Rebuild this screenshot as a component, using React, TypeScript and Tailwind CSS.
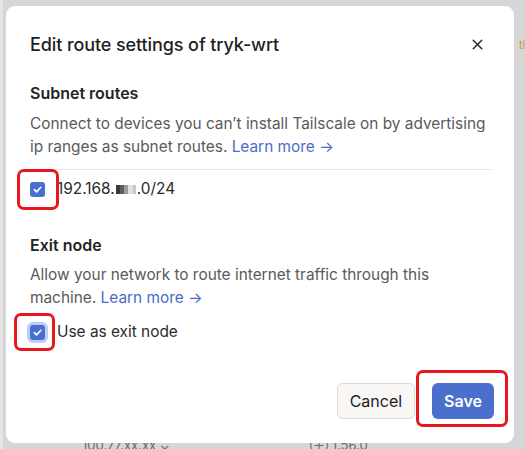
import { X } from "lucide-react";

const font = { fontFamily: "Inter, 'Liberation Sans', sans-serif" };

function Check({ focused }: { focused?: boolean }) {
  return (
    <span
      className={`grid h-[15px] w-[15px] shrink-0 place-items-center rounded-[3px] bg-[#4b6fcd] ${
        focused ? "ring-[3px] ring-[#bcd0f7]" : ""
      }`}
    >
      <svg viewBox="0 0 12 12" className="h-[11px] w-[11px]" fill="none">
        <path d="M2.5 6.2 5 8.6 9.6 3.6" stroke="white" strokeWidth="1.8" strokeLinecap="round" strokeLinejoin="round" />
      </svg>
    </span>
  );
}

function LearnMore() {
  return <a className="text-[#4a6bc9]">Learn more →</a>;
}

/** Red annotation box drawn over the screenshot. */
function Mark({ className }: { className: string }) {
  return <div className={`pointer-events-none absolute rounded-[7px] border-[3px] border-[#e8161f] ${className}`} />;
}

export default function App() {
  return (
    <div className="relative h-[449px] w-[525px] overflow-hidden bg-[#d6d6d6]" style={font}>
      {/* dimmed page behind the dialog */}
      <div className="flex h-full">
        <div className="w-[3px] bg-[#e4e4e4]" />
        <div className="flex-1" />
        <div className="mt-[40px] h-[10px] w-[6px] text-[11px] leading-[10px] text-[#c49a4a]">ti</div>
      </div>
      <div className="absolute bottom-[-6px] left-[82px] flex gap-[140px] text-[13px] text-[#6a6a6a]">
        <span>100.77.xx.xx ⌄</span>
        <span>⊕ 1.56.0</span>
      </div>

      {/* dialog */}
      <div className="absolute inset-0 p-[6px] pr-[11px] pb-[6px]">
        <div className="flex h-full flex-col rounded-[9px] bg-white pb-6 pl-6 pr-5 pt-6 text-[16px]">
          <div className="flex h-7 items-center justify-between">
            <h2 className="text-[18px] font-medium tracking-[-0.1px] text-[#1f1f1f]">Edit route settings of tryk-wrt</h2>
            <X className="mr-[8px] h-[17px] w-[17px] text-[#2a2a2a]" strokeWidth={2.1} />
          </div>

          <h3 className="mt-[23px] text-[16px] font-semibold leading-6 text-[#242424]">Subnet routes</h3>
          <p className="mt-[7px] text-[15.4px] leading-[23px] text-[#5a5a5a]">
            Connect to devices you can’t install Tailscale on by advertising
            <br />
            ip ranges as subnet routes. <LearnMore />
          </p>
          <div className="mr-[2px] mt-[11px] border-t border-[#e6e6e6]" />
          <label className="mt-[10px] flex h-[18px] items-center gap-[12px] text-[15.4px] text-[#2b2b2b]">
            <Check />
            <span className="flex items-center">
              192.168.
              <span className="mx-[1px] flex h-[9px] items-stretch">
                <span className="w-[4px] bg-[#3a3a3a]" />
                <span className="w-[4px] bg-[#5e5e5e]" />
                <span className="w-[4px] bg-[#9a9a9a]" />
                <span className="w-[5px] bg-[#e0e0e0]" />
                <span className="w-[3px] bg-[#c8c8c8]" />
              </span>
              .0/24
            </span>
          </label>

          <h3 className="mt-[35px] text-[16px] font-semibold leading-6 text-[#242424]">Exit node</h3>
          <p className="mt-1.5 text-[15.4px] leading-[23px] text-[#5a5a5a]">
            Allow your network to route internet traffic through this
            <br />
            machine. <LearnMore />
          </p>
          <label className="mt-[13px] flex h-[20px] items-center gap-[12px] text-[15.4px] text-[#2b2b2b]">
            <Check focused />
            <span>Use as exit node</span>
          </label>

          <div className="mt-auto flex justify-end gap-[17px]">
            <button className="h-9 rounded-md border border-[#dcd9d6] bg-[#f8f7f6] px-[12px] text-[16px] text-[#222]">
              Cancel
            </button>
            <button className="h-9 rounded-md bg-[#4b6fcd] px-[12px] text-[16px] font-semibold text-white">Save</button>
          </div>
        </div>
      </div>

      <Mark className="left-[17px] top-[169px] h-[41px] w-[42px]" />
      <Mark className="left-[14px] top-[313px] h-[38px] w-[41px]" />
      <Mark className="left-[416px] top-[370px] h-[57px] w-[92px]" />
    </div>
  );
}
